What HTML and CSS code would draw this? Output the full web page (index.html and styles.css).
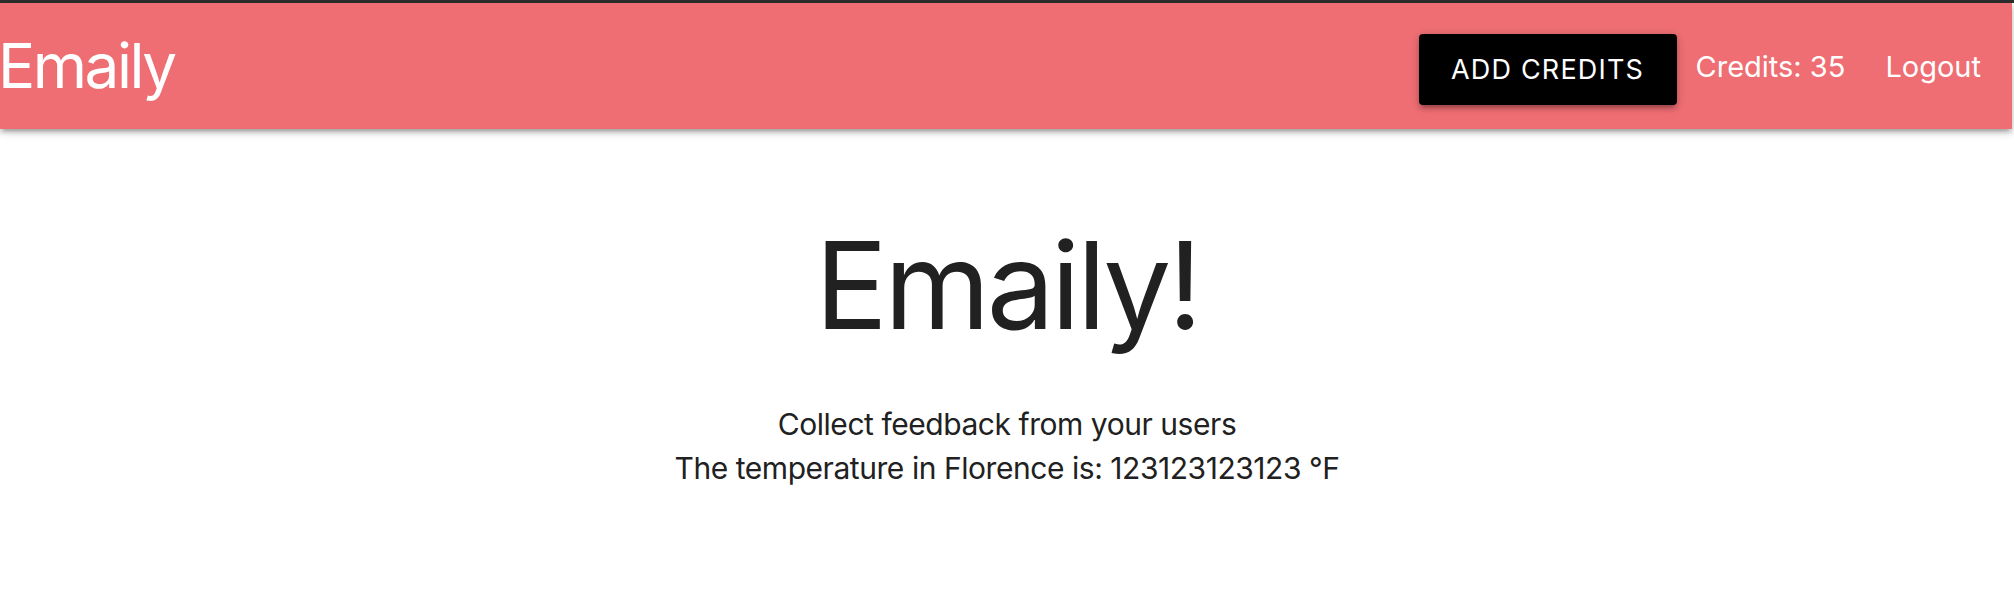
FILE: index.html
```html
<!DOCTYPE html>
<html lang="en">
<head>
<meta charset="utf-8">
<title>Emaily</title>
<link rel="stylesheet" href="styles.css">
</head>
<body>
<div class="chrome-edge"></div>
<nav class="navbar">
  <a class="brand-logo" href="#">Emaily</a>
  <ul class="nav-links">
    <li><a class="btn" href="#">ADD CREDITS</a></li>
    <li class="credits">Credits: 35</li>
    <li><a class="logout" href="#">Logout</a></li>
  </ul>
</nav>
<main class="landing">
  <h1 class="title">Emaily!</h1>
  <p class="tagline">Collect feedback from your users</p>
  <p class="tagline">The temperature in Florence is: 123123123123 °F</p>
</main>
</body>
</html>
```
FILE: styles.css
```css
html, body {
  margin: 0;
  padding: 0;
  background: #ffffff;
  font-family: Inter, "Noto Sans", sans-serif;
  color: #212121;
}

.chrome-edge {
  height: 3px;
  background: #2e2e2e;
}

.navbar {
  width: calc(100% - 2px);
  height: 126px;
  background: #ee6e73;
  display: flex;
  align-items: center;
  justify-content: space-between;
  box-shadow: 0 4px 4px 0 rgba(0,0,0,.14), 0 6px 2px -4px rgba(0,0,0,.12), 0 2px 10px 0 rgba(0,0,0,.2);
  position: relative;
  z-index: 1;
}

.brand-logo {
  color: #ffffff;
  text-decoration: none;
  font-size: 62px;
  line-height: 1;
  letter-spacing: -2.5px;
  margin-left: -2px;
  margin-top: -1px;
}

.nav-links {
  list-style: none;
  margin: 0;
  padding: 0 31px 0 0;
  display: flex;
  align-items: center;
  height: 100%;
}

.nav-links li {
  color: #ffffff;
  font-size: 29px;
  line-height: 1;
}

.btn {
  display: flex;
  align-items: center;
  justify-content: center;
  width: 258px;
  height: 71px;
  margin-top: 7px;
  margin-right: 19px;
  background: #000000;
  color: #ffffff;
  text-decoration: none;
  font-size: 27px;
  letter-spacing: 1.2px;
  border-radius: 4px;
  box-shadow: 0 4px 4px 0 rgba(0,0,0,.14), 0 6px 2px -4px rgba(0,0,0,.12), 0 2px 10px 0 rgba(0,0,0,.2);
}

.credits {
  margin-right: 40px;
}

.logout {
  color: #ffffff;
  text-decoration: none;
}

.landing {
  text-align: center;
}

.title {
  margin: 90px 0 0;
  font-size: 121px;
  line-height: 133px;
  font-weight: 400;
  letter-spacing: -3.5px;
  color: #212121;
}

.tagline {
  margin: 0;
  font-size: 30px;
  line-height: 44px;
  letter-spacing: -0.45px;
  color: #212121;
}

.title + .tagline {
  margin-top: 50px;
}
```
